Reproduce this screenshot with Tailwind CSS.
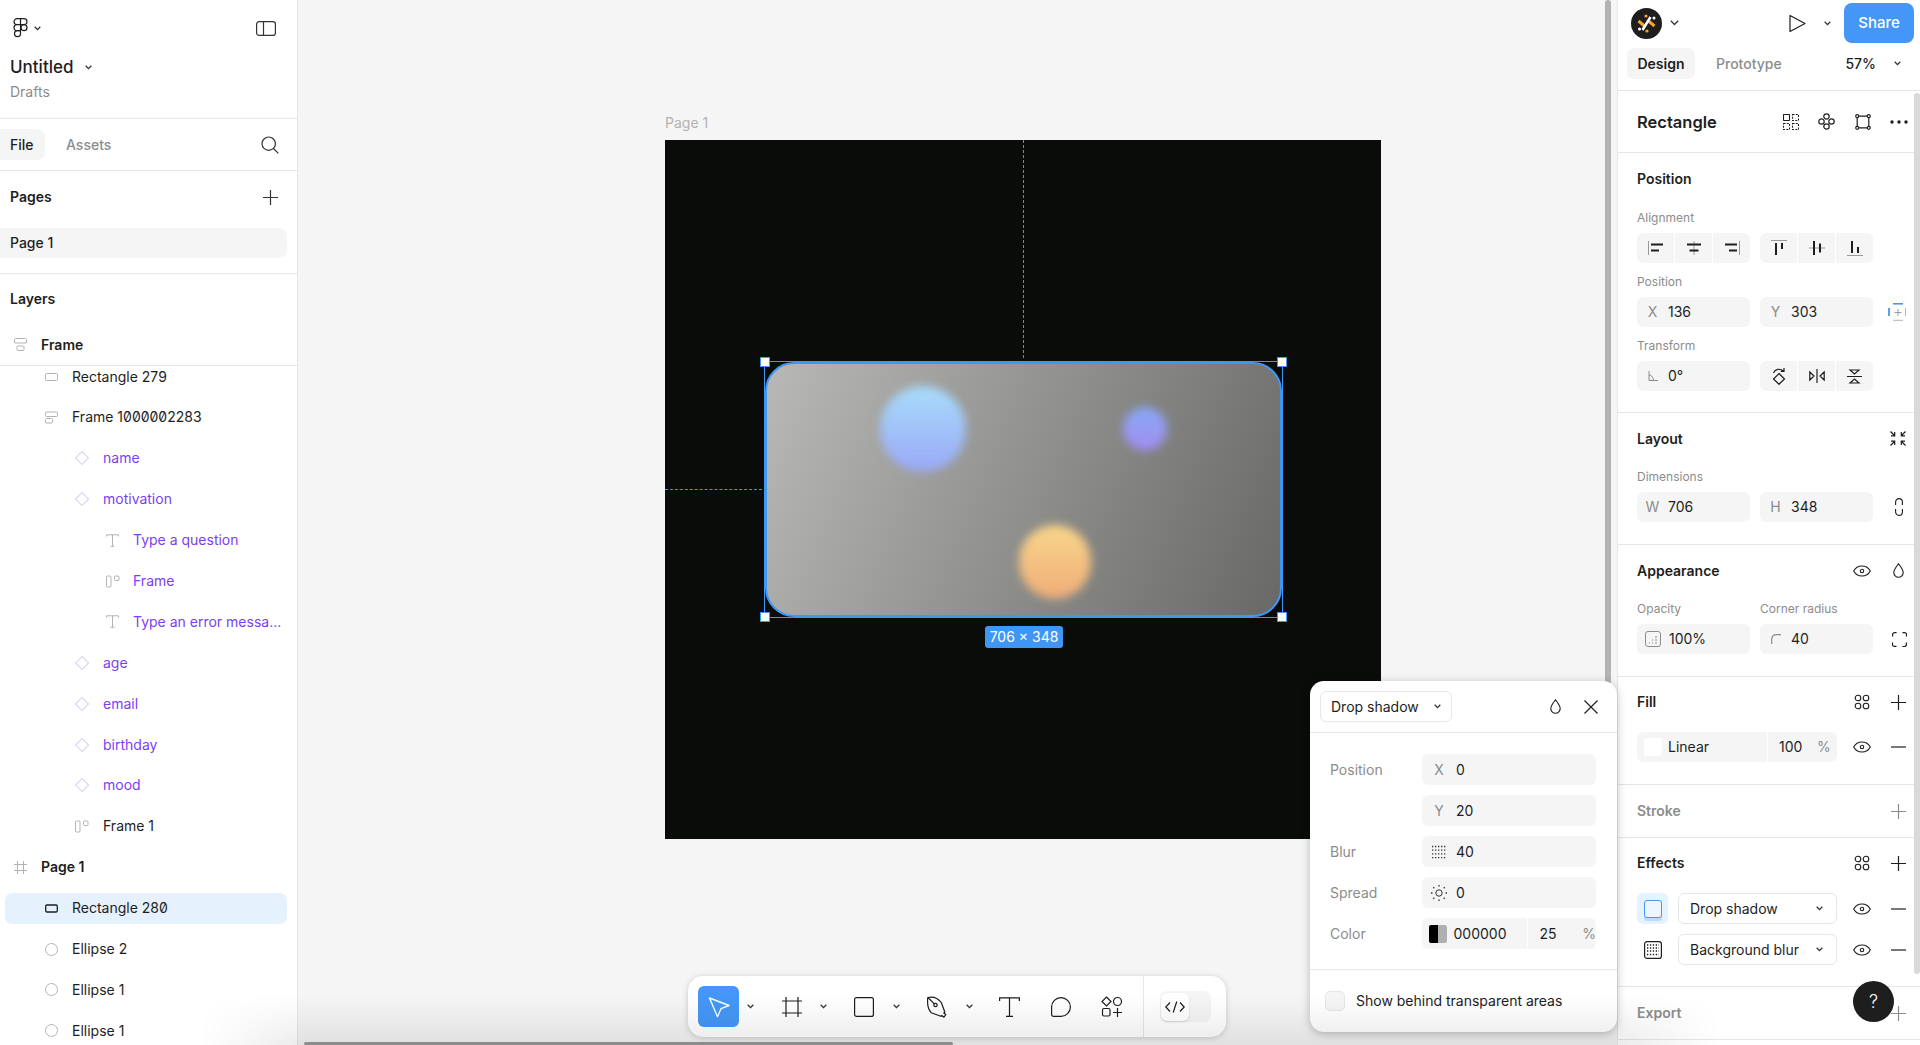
<!DOCTYPE html>
<html lang="en">
	<head>
		<meta charset="UTF-8" />
		<title>Untitled – Figma</title>
		<script src="https://cdn.jsdelivr.net/npm/@tailwindcss/browser@4"></script>
	</head>
	<body class="bg-white">
		<div class="relative flex w-[1920px] h-[1045px] overflow-hidden font-[Inter,sans-serif] text-[14px] leading-[20px] text-[#1e1e1e]">

			<!-- left panel -->
			<aside class="w-[298px] shrink-0 h-full bg-white border-r border-[#e6e6e6] overflow-hidden">
				<div class="h-[119px] pt-[8px] border-b border-[#e6e6e6] pl-[10px] pr-[21px]">
					<div class="flex items-center justify-between h-[40px]">
						<div class="flex items-center gap-[6px] pl-[3px]">
							<svg class="w-[15px] h-[20px]" viewBox="0 0 15 20" fill="none" stroke="#1e1e1e" stroke-width="1.2"><path d="M7.5.7H4a3 3 0 0 0 0 6h3.5zM7.5.7H11a3 3 0 0 1 0 6H7.5zM7.5 6.7H4a3 3 0 0 0 0 6h3.5z"/><circle cx="11" cy="9.7" r="3"/><path d="M7.5 12.7H4a3 3 0 1 0 3.500 3z"/></svg>
							<svg class="w-[7px] h-[5px]" viewBox="0 0 7 5" fill="none" stroke="#333" stroke-width="1.300"><path d="M.7.8l2.800 2.800L6.300.8"/></svg>
						</div>
						<svg class="w-[20px] h-[15px]" viewBox="0 0 20 15" fill="none" stroke="#333" stroke-width="1.200"><rect x=".6" y=".6" width="18.800" height="13.800" rx="2.500"/><path d="M7.500.6v13.800"/></svg>
					</div>
					<div class="flex items-center gap-[12px] h-[26px] mt-[6px]">
						<span class="text-[17px] font-medium">Untitled</span>
						<svg class="w-[7px] h-[5px]" viewBox="0 0 7 5" fill="none" stroke="#333" stroke-width="1.300"><path d="M.7.8l2.800 2.800L6.300.8"/></svg>
					</div>
					<div class="h-[20px] mt-[2px] text-[#8c8c8c]">Drafts</div>
				</div>
				<div class="flex items-center h-[52px] border-b border-[#e6e6e6] pr-[18px]">
					<div class="flex items-center w-[45px] h-[31px] pl-[10px] bg-[#f5f5f5] rounded-r-[8px] font-medium">File</div>
					<div class="ml-[21px] text-[#8c8c8c] font-medium">Assets</div>
					<svg class="ml-auto w-[18px] h-[18px]" viewBox="0 0 18 18" fill="none" stroke="#333" stroke-width="1.200"><circle cx="7.700" cy="7.700" r="6.700"/><path d="M12.500 12.500l4.800 4.800"/></svg>
				</div>
				<div class="h-[103px] border-b border-[#e6e6e6]">
					<div class="flex items-center justify-between h-[52px] pl-[10px] pr-[19px]">
						<span class="font-semibold">Pages</span>
						<svg class="w-[15px] h-[15px]" viewBox="0 0 15 15" stroke="#333" stroke-width="1.200"><path d="M7.500 0v15M0 7.500h15"/></svg>
					</div>
					<div class="flex items-center w-[287px] h-[30px] mt-[5px] pl-[10px] bg-[#f5f5f5] rounded-r-[8px] font-medium">Page 1</div>
				</div>
				<div class="flex items-center h-[50px] pl-[10px] font-semibold">Layers</div>
				<div class="flex items-center h-[42px] pl-[14px] border-b border-[#e6e6e6] font-semibold">
					<svg class="w-[13px] h-[13px] mr-[14px]" viewBox="0 0 13 13" fill="none" stroke="#b3b3b3"><rect x=".5" y=".5" width="12" height="4.500" rx="1"/><rect x="3" y="8" width="7" height="4.500" rx="1"/></svg>
					Frame
				</div>

				<!-- layer rows -->
				<div class="slashed-zero">
					<div class="flex items-end h-[31px] pb-[10px] pl-[45px]">
						<svg class="w-[13px] h-[20px] mr-[14px]" viewBox="0 0 13 20" fill="none" stroke="#b3b3b3"><rect x=".5" y="6.500" width="12" height="7" rx="1"/></svg>
						Rectangle 279
					</div>
					<div class="flex items-center h-[40.9px] pl-[45px]">
						<svg class="w-[13px] h-[13px] mr-[14px]" viewBox="0 0 13 13" fill="none" stroke="#b3b3b3"><rect x=".5" y="1" width="12" height="4.500" rx="1"/><rect x=".5" y="7.500" width="7" height="4.500" rx="1"/></svg>
						Frame 1000002283
					</div>
					<div class="flex items-center h-[40.9px] pl-[74px] text-[#7b3ff2]">
						<svg class="w-[16px] h-[16px] mr-[13px]" viewBox="0 0 16 16" fill="none" stroke="#c9bbf0"><path d="M8 1.500L14.500 8 8 14.500 1.500 8z"/></svg>
						name
					</div>
					<div class="flex items-center h-[40.9px] pl-[74px] text-[#7b3ff2]">
						<svg class="w-[16px] h-[16px] mr-[13px]" viewBox="0 0 16 16" fill="none" stroke="#c9bbf0"><path d="M8 1.500L14.500 8 8 14.500 1.500 8z"/></svg>
						motivation
					</div>
					<div class="flex items-center h-[40.9px] pl-[106px] text-[#7b3ff2]">
						<svg class="w-[13px] h-[13px] mr-[14px]" viewBox="0 0 13 13" fill="none" stroke="#b3b3b3"><path d="M.5 2.500V.8h12v1.700M6.500.8v11.500M4.500 12.300h4"/></svg>
						Type a question
					</div>
					<div class="flex items-center h-[40.9px] pl-[106px] text-[#7b3ff2]">
						<svg class="w-[14px] h-[13px] mr-[13px]" viewBox="0 0 14 13" fill="none" stroke="#b3b3b3"><rect x=".5" y="1" width="4.500" height="11" rx="1"/><rect x="8.500" y="1" width="4.500" height="4.500" rx="1"/></svg>
						Frame
					</div>
					<div class="flex items-center h-[40.9px] pl-[106px] text-[#7b3ff2]">
						<svg class="w-[13px] h-[13px] mr-[14px]" viewBox="0 0 13 13" fill="none" stroke="#b3b3b3"><path d="M.5 2.500V.8h12v1.700M6.500.8v11.500M4.500 12.300h4"/></svg>
						Type an error messa...
					</div>
					<div class="flex items-center h-[40.9px] pl-[74px] text-[#7b3ff2]">
						<svg class="w-[16px] h-[16px] mr-[13px]" viewBox="0 0 16 16" fill="none" stroke="#c9bbf0"><path d="M8 1.500L14.500 8 8 14.500 1.500 8z"/></svg>
						age
					</div>
					<div class="flex items-center h-[40.9px] pl-[74px] text-[#7b3ff2]">
						<svg class="w-[16px] h-[16px] mr-[13px]" viewBox="0 0 16 16" fill="none" stroke="#c9bbf0"><path d="M8 1.500L14.500 8 8 14.500 1.500 8z"/></svg>
						email
					</div>
					<div class="flex items-center h-[40.9px] pl-[74px] text-[#7b3ff2]">
						<svg class="w-[16px] h-[16px] mr-[13px]" viewBox="0 0 16 16" fill="none" stroke="#c9bbf0"><path d="M8 1.500L14.500 8 8 14.500 1.500 8z"/></svg>
						birthday
					</div>
					<div class="flex items-center h-[40.9px] pl-[74px] text-[#7b3ff2]">
						<svg class="w-[16px] h-[16px] mr-[13px]" viewBox="0 0 16 16" fill="none" stroke="#c9bbf0"><path d="M8 1.500L14.500 8 8 14.500 1.500 8z"/></svg>
						mood
					</div>
					<div class="flex items-center h-[40.9px] pl-[75px]">
						<svg class="w-[14px] h-[13px] mr-[14px]" viewBox="0 0 14 13" fill="none" stroke="#b3b3b3"><rect x=".5" y="1" width="4.500" height="11" rx="1"/><rect x="8.500" y="1" width="4.500" height="4.500" rx="1"/></svg>
						Frame 1
					</div>
					<div class="flex items-center h-[40.9px] pl-[14px] font-semibold">
						<svg class="w-[13px] h-[13px] mr-[14px]" viewBox="0 0 13 13" fill="none" stroke="#b3b3b3"><path d="M3.500 0v13M9.500 0v13M0 3.500h13M0 9.500h13"/></svg>
						Page 1
					</div>
					<div class="flex items-center h-[40.9px]">
						<div class="flex items-center w-[282px] h-[31px] ml-[5px] pl-[40px] bg-[#e5f2fd] rounded-[7px]">
							<svg class="w-[13px] h-[9px] mr-[14px]" viewBox="0 0 13 9" fill="none" stroke="#1e1e1e" stroke-width="1.300"><rect x=".7" y="1" width="11.600" height="7" rx="1.200"/></svg>
							Rectangle 280
						</div>
					</div>
					<div class="flex items-center h-[40.9px] pl-[45px]">
						<svg class="w-[13px] h-[13px] mr-[14px]" viewBox="0 0 13 13" fill="none" stroke="#b3b3b3"><circle cx="6.500" cy="6.500" r="6"/></svg>
						Ellipse 2
					</div>
					<div class="flex items-center h-[40.9px] pl-[45px]">
						<svg class="w-[13px] h-[13px] mr-[14px]" viewBox="0 0 13 13" fill="none" stroke="#b3b3b3"><circle cx="6.500" cy="6.500" r="6"/></svg>
						Ellipse 1
					</div>
					<div class="flex items-center h-[40.9px] pl-[45px]">
						<svg class="w-[13px] h-[13px] mr-[14px]" viewBox="0 0 13 13" fill="none" stroke="#b3b3b3"><circle cx="6.500" cy="6.500" r="6"/></svg>
						Ellipse 1
					</div>
				</div>
			</aside>

			<!-- canvas -->
			<main class="relative flex-1 h-full bg-[#f5f5f5]">
				<div class="absolute left-[367px] top-[113px] text-[#b3b3b3]">Page 1</div>
				<div class="absolute left-[367px] top-[140px] w-[716px] h-[699px] bg-[#0a0c0a]">
					<div class="absolute left-[358px] top-0 h-[218px] border-l border-dashed border-[#3f96f5]"></div>
					<div class="absolute left-0 top-[349px] w-[97px] border-t border-dashed border-[#3f96f5]"></div>
					<!-- selected rectangle -->
					<div class="absolute left-[99px] top-[221px] w-[519px] h-[257px] border border-[#3f96f5]">
						<div class="relative h-full overflow-hidden rounded-[29px] border-2 border-[#3f96f5] bg-[linear-gradient(112deg,#b8b8b6,#686966)]">
							<div class="absolute left-[113px] top-[22px] w-[86px] h-[86px] rounded-full blur-[5px] bg-gradient-to-b from-[#a8dcfb] to-[#99a8f6]"></div>
							<div class="absolute left-[356px] top-[43px] w-[44px] h-[44px] rounded-full blur-[5px] bg-gradient-to-b from-[#85a9f6] to-[#a18bf0]"></div>
							<div class="absolute left-[252px] top-[161px] w-[72px] h-[74px] rounded-full blur-[5px] bg-gradient-to-b from-[#f8d68a] to-[#efac78]"></div>
						</div>
						<div class="absolute -left-[5px] -top-[5px] w-[10px] h-[10px] bg-white border border-[#3f96f5]"></div>
						<div class="absolute -right-[5px] -top-[5px] w-[10px] h-[10px] bg-white border border-[#3f96f5]"></div>
						<div class="absolute -left-[5px] -bottom-[5px] w-[10px] h-[10px] bg-white border border-[#3f96f5]"></div>
						<div class="absolute -right-[5px] -bottom-[5px] w-[10px] h-[10px] bg-white border border-[#3f96f5]"></div>
					</div>
					<div class="absolute left-[320px] top-[486px] w-[78px] h-[22px] flex items-center justify-center bg-[#3f96f5] rounded-[3px] text-white">706 × 348</div>
				</div>
				<!-- canvas scrollbars -->
				<div class="absolute left-[1307px] top-0 w-[6px] h-[685px] bg-[#b3b3b3] rounded-full"></div>
				<div class="absolute left-[6px] bottom-0 w-[649px] h-[3px] bg-[#999999] rounded-full"></div>
			</main>

			<!-- right panel -->
			<aside class="relative w-[303px] shrink-0 h-full bg-white border-l border-[#e6e6e6] overflow-hidden">
				<div class="h-[91px] border-b border-[#e6e6e6]">
					<div class="flex items-center h-[46px] pr-[6px]">
						<svg class="ml-[13px] w-[31px] h-[31px]" viewBox="0 0 31 31">
							<circle cx="15.500" cy="15.500" r="15.500" fill="#1e1e1e"/>
							<path d="M7.500 13l6 5M17.500 13l6 5" stroke="#f5a623" stroke-width="3"/>
							<path d="M11.500 22l8-13" stroke="#ffffff" stroke-width="2.500"/>
							<circle cx="15" cy="8" r="1.600" fill="#f5a623"/>
							<circle cx="16" cy="23" r="1.600" fill="#f5a623"/>
							<circle cx="23" cy="10" r="1.500" fill="#ffffff"/>
							<circle cx="8.500" cy="21" r="1.500" fill="#ffffff"/>
						</svg>
						<svg class="ml-[8px] w-[9px] h-[6px]" viewBox="0 0 9 6" fill="none" stroke="#333" stroke-width="1.300"><path d="M.8.8L4.500 4.500 8.200.8"/></svg>
						<svg class="ml-[110px] w-[17px] h-[19px]" viewBox="0 0 17 19" fill="none" stroke="#1e1e1e" stroke-width="1.200" stroke-linejoin="round"><path d="M1 1.500v16L16 9.500z"/></svg>
						<svg class="ml-[18px] w-[7px] h-[5px]" viewBox="0 0 7 5" fill="none" stroke="#333" stroke-width="1.300"><path d="M.7.8l2.800 2.800L6.300.8"/></svg>
						<div class="ml-auto flex items-center justify-center w-[70px] h-[40px] bg-[#4597f7] rounded-[8px] text-white text-[15px] font-medium">Share</div>
					</div>
					<div class="flex items-center h-[33px] mt-[1px] pl-[9px] pr-[19px]">
						<div class="flex items-center justify-center w-[68px] h-[31px] bg-[#f5f5f5] rounded-[7px] font-semibold">Design</div>
						<div class="ml-[21px] text-[#8c8c8c] font-medium">Prototype</div>
						<div class="ml-auto font-medium">57%</div>
						<svg class="ml-[18px] w-[7px] h-[5px]" viewBox="0 0 7 5" fill="none" stroke="#333" stroke-width="1.300"><path d="M.7.8l2.800 2.800L6.300.8"/></svg>
					</div>
				</div>
				<div class="flex items-center h-[62px] pl-[19px] border-b border-[#e6e6e6]">
					<span class="text-[16.5px] font-semibold">Rectangle</span>
					<svg class="ml-[66px] w-[16px] h-[16px]" viewBox="0 0 16 16" fill="none" stroke="#1e1e1e" stroke-width="1.100"><rect x=".5" y=".5" width="6" height="6" rx=".5"/><rect x="9.500" y=".5" width="6" height="6" stroke-dasharray="2 1.300"/><rect x=".5" y="9.500" width="6" height="6" stroke-dasharray="2 1.300"/><rect x="9.500" y="9.500" width="6" height="6" stroke-dasharray="2 1.300"/></svg>
					<svg class="ml-[19px] w-[17px] h-[17px]" viewBox="0 0 17 17" fill="none" stroke="#1e1e1e" stroke-width="1.200"><circle cx="8.500" cy="3.500" r="2.700"/><circle cx="13.500" cy="8.500" r="2.700"/><circle cx="3.500" cy="8.500" r="2.700"/><circle cx="8.500" cy="13.500" r="2.700"/></svg>
					<svg class="ml-[20px] w-[16px] h-[16px]" viewBox="0 0 16 16" fill="none" stroke="#1e1e1e" stroke-width="1.200"><path d="M3.500 2.200h9M13.800 3.500v9M12.500 13.800h-9M2.200 12.500v-9"/><circle cx="2.200" cy="2.200" r="1.500"/><circle cx="13.800" cy="2.200" r="1.500"/><circle cx="13.800" cy="13.800" r="1.500"/><circle cx="2.200" cy="13.800" r="1.500"/></svg>
					<svg class="ml-[19px] w-[18px] h-[4px]" viewBox="0 0 18 4" fill="#1e1e1e"><circle cx="2" cy="2" r="1.700"/><circle cx="9" cy="2" r="1.700"/><circle cx="16" cy="2" r="1.700"/></svg>
				</div>

				<!-- position -->
				<section class="h-[260px] pl-[19px] border-b border-[#e6e6e6]">
					<div class="flex items-center h-[52px] font-semibold">Position</div>
					<div class="h-[28px] pt-[5px] text-[12px] leading-[16px] text-[#8c8c8c]">Alignment</div>
					<div class="flex gap-[10px]">
						<div class="flex gap-px w-[113px] h-[30px] bg-white rounded-[6px] overflow-hidden">
							<div class="flex-1 flex items-center justify-center bg-[#f5f5f5]"><svg class="w-[16px] h-[14px]" viewBox="0 0 16 14"><path d="M.5 0v14" stroke="#999"/><path d="M3 3.500h12M3 9.500h8" stroke="#1e1e1e" stroke-width="2"/></svg></div>
							<div class="flex-1 flex items-center justify-center bg-[#f5f5f5]"><svg class="w-[16px] h-[14px]" viewBox="0 0 16 14"><path d="M8 0v14" stroke="#999"/><path d="M1 3.500h14M3.500 9.500h9" stroke="#1e1e1e" stroke-width="2"/></svg></div>
							<div class="flex-1 flex items-center justify-center bg-[#f5f5f5]"><svg class="w-[16px] h-[14px]" viewBox="0 0 16 14"><path d="M15.500 0v14" stroke="#999"/><path d="M1 3.500h12M5 9.500h8" stroke="#1e1e1e" stroke-width="2"/></svg></div>
						</div>
						<div class="flex gap-px w-[113px] h-[30px] bg-white rounded-[6px] overflow-hidden">
							<div class="flex-1 flex items-center justify-center bg-[#f5f5f5]"><svg class="w-[16px] h-[16px]" viewBox="0 0 16 16"><path d="M0 .5h16" stroke="#999"/><path d="M5 3v12M11 3v6" stroke="#1e1e1e" stroke-width="2"/></svg></div>
							<div class="flex-1 flex items-center justify-center bg-[#f5f5f5]"><svg class="w-[16px] h-[14px]" viewBox="0 0 16 14"><path d="M0 7h16" stroke="#999"/><path d="M5 0v14M11 2.500v9" stroke="#1e1e1e" stroke-width="2"/></svg></div>
							<div class="flex-1 flex items-center justify-center bg-[#f5f5f5]"><svg class="w-[16px] h-[16px]" viewBox="0 0 16 16"><path d="M0 15.500h16" stroke="#999"/><path d="M5 1v12M11 7v6" stroke="#1e1e1e" stroke-width="2"/></svg></div>
						</div>
					</div>
					<div class="h-[34px] pt-[11px] text-[12px] leading-[16px] text-[#8c8c8c]">Position</div>
					<div class="flex items-center gap-[10px]">
						<div class="flex items-center w-[113px] h-[30px] bg-[#f5f5f5] rounded-[6px]"><span class="w-[31px] text-center text-[#8c8c8c]">X</span>136</div>
						<div class="flex items-center w-[113px] h-[30px] bg-[#f5f5f5] rounded-[6px]"><span class="w-[31px] text-center text-[#8c8c8c]">Y</span>303</div>
						<svg class="ml-[5px] w-[18px] h-[18px]" viewBox="0 0 18 18" fill="none"><path d="M5 .8h10" stroke="#4597f7" stroke-width="1.600"/><path d="M1 5v8" stroke="#4597f7" stroke-width="1.800"/><path d="M5 17.300h10M17.500 5v8" stroke="#b3b3b3"/><path d="M10 6v7M6.500 9.500h7" stroke="#999"/></svg>
					</div>
					<div class="h-[34px] pt-[11px] text-[12px] leading-[16px] text-[#8c8c8c]">Transform</div>
					<div class="flex gap-[10px]">
						<div class="flex items-center w-[113px] h-[30px] bg-[#f5f5f5] rounded-[6px]"><span class="flex justify-center w-[31px]"><svg class="w-[10px] h-[10px]" viewBox="0 0 10 10" fill="none" stroke="#8c8c8c"><path d="M1 0v9.500h9M1 4c2.500 0 4.500 2.500 4.500 5.500"/></svg></span>0°</div>
						<div class="flex gap-px w-[113px] h-[30px] bg-white rounded-[6px] overflow-hidden">
							<div class="flex-1 flex items-center justify-center bg-[#f5f5f5]"><svg class="w-[14px] h-[18px]" viewBox="0 0 14 18" fill="none" stroke="#1e1e1e" stroke-width="1.200"><path d="M7 6.500l5.500 5.500L7 17.300 1.500 12zM1.500 6C3 2 8 1 11.500 4M12 1v3.300H8.700"/></svg></div>
							<div class="flex-1 flex items-center justify-center bg-[#f5f5f5]"><svg class="w-[16px] h-[14px]" viewBox="0 0 16 14" fill="none" stroke="#1e1e1e" stroke-width="1.200"><path d="M8 0v14M.8 3v8L5 7zM15.200 3v8L11 7z"/></svg></div>
							<div class="flex-1 flex items-center justify-center bg-[#f5f5f5]"><svg class="w-[15px] h-[15px]" viewBox="0 0 15 15" fill="none" stroke="#1e1e1e" stroke-width="1.200"><path d="M0 7.500h15M3 1h9L7.500 5zM3 14h9L7.500 10z"/></svg></div>
						</div>
					</div>
				</section>

				<!-- layout -->
				<section class="h-[132px] pl-[19px] border-b border-[#e6e6e6]">
					<div class="flex items-center justify-between h-[51px] pr-[14px] font-semibold">
						Layout
						<svg class="w-[16px] h-[15px]" viewBox="0 0 16 15" fill="none" stroke="#1e1e1e" stroke-width="1.200"><path d="M.5.500l4 4M1 4.800h3.700V1M15.500.500l-4 4M15 4.800h-3.700V1M.5 14.500l4-4M1 10.200h3.700V14M15.500 14.500l-4-4M15 10.200h-3.700V14"/></svg>
					</div>
					<div class="h-[28px] pt-[5px] text-[12px] leading-[16px] text-[#8c8c8c]">Dimensions</div>
					<div class="flex items-center gap-[10px]">
						<div class="flex items-center w-[113px] h-[30px] bg-[#f5f5f5] rounded-[6px]"><span class="w-[31px] text-center text-[#8c8c8c]">W</span>706</div>
						<div class="flex items-center w-[113px] h-[30px] bg-[#f5f5f5] rounded-[6px]"><span class="w-[31px] text-center text-[#8c8c8c]">H</span>348</div>
						<svg class="ml-[12px] w-[8px] h-[18px]" viewBox="0 0 8 18" fill="none" stroke="#1e1e1e" stroke-width="1.100"><path d="M.6 7V4a3.400 3.400 0 0 1 6.800 0v3M.6 11v3a3.400 3.400 0 0 0 6.800 0v-3"/></svg>
					</div>
				</section>

				<!-- appearance -->
				<section class="h-[132px] pl-[19px] border-b border-[#e6e6e6]">
					<div class="flex items-center h-[51px] pr-[16px] font-semibold">
						Appearance
						<svg class="ml-auto w-[18px] h-[12px]" viewBox="0 0 18 12" fill="none" stroke="#1e1e1e" stroke-width="1.100"><path d="M.7 6C2.500 2.600 5.500 1 9 1s6.500 1.600 8.300 5C15.500 9.400 12.500 11 9 11S2.500 9.400.7 6z"/><circle cx="9" cy="6" r="1.700" /></svg>
						<svg class="ml-[22px] w-[11px] h-[15px]" viewBox="0 0 11 15" fill="none" stroke="#1e1e1e" stroke-width="1.100"><path d="M5.500.8C3.500 3.500.8 6.500.8 9.500a4.700 4.700 0 0 0 9.400 0C10.200 6.500 7.500 3.500 5.500.8z"/></svg>
					</div>
					<div class="flex gap-[10px] h-[28px] pt-[5px] text-[12px] leading-[16px] text-[#8c8c8c]"><span class="w-[113px]">Opacity</span><span>Corner radius</span></div>
					<div class="flex items-center gap-[10px]">
						<div class="flex items-center w-[113px] h-[30px] bg-[#f5f5f5] rounded-[6px]"><span class="flex justify-center w-[32px]"><svg class="w-[16px] h-[16px]" viewBox="0 0 16 16" fill="none" stroke="#8c8c8c"><rect x=".5" y=".5" width="15" height="15" rx="2.500"/><path d="M4 12h1M7 12h1M10 12h2M7 9h1M10 9h2M10 6h2" stroke-width="1.200"/></svg></span>100%</div>
						<div class="flex items-center w-[113px] h-[30px] bg-[#f5f5f5] rounded-[6px]"><span class="flex justify-center w-[31px]"><svg class="w-[10px] h-[10px]" viewBox="0 0 10 10" fill="none" stroke="#8c8c8c" stroke-width="1.200"><path d="M.7 10V5A4.300 4.300 0 0 1 5 .7h5"/></svg></span>40</div>
						<svg class="ml-[9px] w-[15px] h-[15px]" viewBox="0 0 15 15" fill="none" stroke="#1e1e1e" stroke-width="1.200"><path d="M.6 4.500V2.600a2 2 0 0 1 2-2h2M10.500.6h2a2 2 0 0 1 2 2v2M14.400 10.500v2a2 2 0 0 1-2 2h-2M4.500 14.400h-2a2 2 0 0 1-2-2v-2"/></svg>
					</div>
				</section>

				<!-- fill -->
				<section class="h-[108px] pl-[19px] border-b border-[#e6e6e6]">
					<div class="flex items-center h-[50px] pr-[14px] font-semibold">
						Fill
						<svg class="ml-auto w-[16px] h-[16px]" viewBox="0 0 16 16" fill="none" stroke="#1e1e1e" stroke-width="1.100"><circle cx="4" cy="4" r="2.800"/><circle cx="12" cy="4" r="2.800"/><circle cx="4" cy="12" r="2.800"/><circle cx="12" cy="12" r="2.800"/></svg>
						<svg class="ml-[21px] w-[15px] h-[15px]" viewBox="0 0 15 15" stroke="#1e1e1e" stroke-width="1.200"><path d="M7.500 0v15M0 7.500h15"/></svg>
					</div>
					<div class="flex items-center mt-[5px]">
						<div class="flex items-center w-[200px] h-[30px] bg-[#f5f5f5] rounded-[6px] pl-[7px]">
							<span class="w-[18px] h-[18px] bg-white rounded-[3px] mr-[6px]"></span>
							<span class="w-[99px]">Linear</span>
							<span class="flex items-center h-full border-l border-white pl-[11px] w-[50px]">100</span>
							<span class="text-[#8c8c8c]">%</span>
						</div>
						<svg class="ml-[16px] w-[18px] h-[12px]" viewBox="0 0 18 12" fill="none" stroke="#1e1e1e" stroke-width="1.100"><path d="M.7 6C2.500 2.600 5.500 1 9 1s6.500 1.600 8.300 5C15.500 9.400 12.500 11 9 11S2.500 9.400.7 6z"/><circle cx="9" cy="6" r="1.700"/></svg>
						<svg class="ml-[20px] w-[15px] h-[2px]" viewBox="0 0 15 2" stroke="#1e1e1e" stroke-width="1.200"><path d="M0 1h15"/></svg>
					</div>
				</section>

				<!-- stroke -->
				<section class="flex items-center h-[53px] pl-[19px] pr-[14px] border-b border-[#e6e6e6] font-semibold text-[#8c8c8c]">
					Stroke
					<svg class="ml-auto w-[15px] h-[15px]" viewBox="0 0 15 15" stroke="#8c8c8c" stroke-width="1.200"><path d="M7.500 0v15M0 7.500h15"/></svg>
				</section>

				<!-- effects -->
				<section class="h-[149px] pl-[19px] border-b border-[#e6e6e6]">
					<div class="flex items-center h-[50px] pr-[14px] font-semibold">
						Effects
						<svg class="ml-auto w-[16px] h-[16px]" viewBox="0 0 16 16" fill="none" stroke="#1e1e1e" stroke-width="1.100"><circle cx="4" cy="4" r="2.800"/><circle cx="12" cy="4" r="2.800"/><circle cx="4" cy="12" r="2.800"/><circle cx="12" cy="12" r="2.800"/></svg>
						<svg class="ml-[21px] w-[15px] h-[15px]" viewBox="0 0 15 15" stroke="#1e1e1e" stroke-width="1.200"><path d="M7.500 0v15M0 7.500h15"/></svg>
					</div>
					<div class="flex items-center mt-[5px]">
						<div class="flex items-center justify-center w-[31px] h-[31px] bg-[#e5f2ff] rounded-[6px]">
							<span class="w-[18px] h-[18px] rounded-[3px] border-[1.500px] border-[#4597f7] bg-[#edf5fe] shadow-[0_3px_0_#bcdcfb]"></span>
						</div>
						<div class="flex items-center justify-between w-[159px] h-[31px] ml-[10px] pl-[11px] pr-[13px] border border-[#e6e6e6] rounded-[6px]">
							Drop shadow
							<svg class="w-[7px] h-[5px]" viewBox="0 0 7 5" fill="none" stroke="#333" stroke-width="1.300"><path d="M.7.8l2.800 2.800L6.300.8"/></svg>
						</div>
						<svg class="ml-[16px] w-[18px] h-[12px]" viewBox="0 0 18 12" fill="none" stroke="#1e1e1e" stroke-width="1.100"><path d="M.7 6C2.500 2.600 5.500 1 9 1s6.500 1.600 8.300 5C15.500 9.400 12.500 11 9 11S2.500 9.400.7 6z"/><circle cx="9" cy="6" r="1.700"/></svg>
						<svg class="ml-[20px] w-[15px] h-[2px]" viewBox="0 0 15 2" stroke="#1e1e1e" stroke-width="1.200"><path d="M0 1h15"/></svg>
					</div>
					<div class="flex items-center mt-[10px]">
						<div class="flex items-center justify-center w-[31px] h-[31px]">
							<svg class="w-[18px] h-[18px]" viewBox="0 0 18 18" fill="none"><rect x=".6" y=".6" width="16.800" height="16.800" rx="2.500" stroke="#1e1e1e" stroke-width="1.200"/><path d="M3 4h12M3 7h12M3 10h12M3 13.500h12" stroke="#1e1e1e" stroke-width="1.300" stroke-dasharray="1.300 1.600"/></svg>
						</div>
						<div class="flex items-center justify-between w-[159px] h-[31px] ml-[10px] pl-[11px] pr-[13px] border border-[#e6e6e6] rounded-[6px]">
							Background blur
							<svg class="w-[7px] h-[5px]" viewBox="0 0 7 5" fill="none" stroke="#333" stroke-width="1.300"><path d="M.7.8l2.800 2.800L6.300.8"/></svg>
						</div>
						<svg class="ml-[16px] w-[18px] h-[12px]" viewBox="0 0 18 12" fill="none" stroke="#1e1e1e" stroke-width="1.100"><path d="M.7 6C2.500 2.600 5.500 1 9 1s6.500 1.600 8.300 5C15.500 9.400 12.500 11 9 11S2.500 9.400.7 6z"/><circle cx="9" cy="6" r="1.700"/></svg>
						<svg class="ml-[20px] w-[15px] h-[2px]" viewBox="0 0 15 2" stroke="#1e1e1e" stroke-width="1.200"><path d="M0 1h15"/></svg>
					</div>
				</section>

				<!-- export -->
				<section class="flex items-center h-[53px] pl-[19px] pr-[14px] border-b border-[#e6e6e6] font-semibold text-[#8c8c8c]">
					Export
					<svg class="ml-auto w-[15px] h-[15px]" viewBox="0 0 15 15" stroke="#8c8c8c" stroke-width="1.200"><path d="M7.500 0v15M0 7.500h15"/></svg>
				</section>

				<div class="absolute right-0 top-[93px] w-[6px] h-[881px] bg-[#d9d9d9] rounded-full"></div>
				<div class="absolute left-[235px] top-[981px] flex items-center justify-center w-[41px] h-[41px] rounded-full bg-[#1e1e1e] text-white text-[18px] font-light">?</div>
			</aside>

			<!-- bottom toolbar -->
			<div class="absolute left-[688px] top-[976px] flex items-center w-[538px] h-[61px] pl-[10px] bg-white rounded-[15px] shadow-[0_1px_6px_rgba(0,0,0,0.18)]">
				<div class="flex items-center justify-center w-[41px] h-[41px] bg-[#4597f7] rounded-[6px]">
					<svg class="w-[24px] h-[24px]" viewBox="0 0 24 24" fill="none" stroke="#ffffff" stroke-width="1.400" stroke-linejoin="round"><path d="M2.500 3L22 10.500l-8 3.200-3.500 8z"/></svg>
				</div>
				<svg class="ml-[8px] w-[7px] h-[5px]" viewBox="0 0 7 5" fill="none" stroke="#333" stroke-width="1.300"><path d="M.7.8l2.800 2.800L6.300.8"/></svg>
				<svg class="ml-[28px] w-[20px] h-[20px]" viewBox="0 0 20 20" stroke="#1e1e1e" stroke-width="1.200"><path d="M4 0v20M16 0v20M0 4h20M0 16h20"/></svg>
				<svg class="ml-[18px] w-[7px] h-[5px]" viewBox="0 0 7 5" fill="none" stroke="#333" stroke-width="1.300"><path d="M.7.8l2.800 2.800L6.300.8"/></svg>
				<svg class="ml-[27px] w-[20px] h-[20px]" viewBox="0 0 20 20" fill="none" stroke="#1e1e1e" stroke-width="1.200"><rect x=".6" y=".6" width="18.800" height="18.800" rx="2"/></svg>
				<svg class="ml-[19px] w-[7px] h-[5px]" viewBox="0 0 7 5" fill="none" stroke="#333" stroke-width="1.300"><path d="M.7.8l2.800 2.800L6.300.8"/></svg>
				<svg class="ml-[27px] w-[22px] h-[22px]" viewBox="0 0 22 22" fill="none" stroke="#1e1e1e" stroke-width="1.200" stroke-linejoin="round"><path d="M.8 1.500c5-1.200 10 .5 13.500 5l3.500 9.500-1 1 2 1.500-1.800 2.700-2.200-1.700-1 .8-9.500-3.500C.8 13 .2 6.500.8 1.500z"/><circle cx="8.500" cy="9" r="1.700"/><path d="M1 1.500L7.300 7.800"/></svg>
				<svg class="ml-[17px] w-[7px] h-[5px]" viewBox="0 0 7 5" fill="none" stroke="#333" stroke-width="1.300"><path d="M.7.8l2.800 2.800L6.300.8"/></svg>
				<svg class="ml-[26px] w-[21px] h-[20px]" viewBox="0 0 21 20" fill="none" stroke="#1e1e1e" stroke-width="1.200"><path d="M.6 4V.8h19.800V4M10.500.8v18.600M7 19.400h7"/></svg>
				<svg class="ml-[31px] w-[20px] h-[20px]" viewBox="0 0 20 20" fill="none" stroke="#1e1e1e" stroke-width="1.200"><path d="M10 .6a9.400 9.400 0 0 1 0 18.800H2.600a2 2 0 0 1-2-2V10A9.400 9.400 0 0 1 10 .6z"/></svg>
				<svg class="ml-[30px] w-[22px] h-[22px]" viewBox="0 0 22 22" fill="none" stroke="#1e1e1e" stroke-width="1.200"><path d="M5.500 1L10 5.500 5.500 10 1 5.500z"/><circle cx="16.500" cy="5.500" r="4"/><rect x="1.500" y="12.500" width="7.500" height="7.500" rx="1.500"/><path d="M16.500 12v9M12 16.500h9"/></svg>
				<div class="ml-[20px] w-px h-full bg-[#e6e6e6]"></div>
				<div class="ml-[16px] w-[51px] h-[31px] p-px bg-[#f5f5f5] rounded-[7px]">
					<div class="flex items-center justify-center w-[28px] h-[28px] mt-px bg-white rounded-[6px] shadow-[0_1px_2px_rgba(0,0,0,0.15)]">
						<svg class="w-[20px] h-[12px]" viewBox="0 0 20 12" fill="none" stroke="#1e1e1e" stroke-width="1.200"><path d="M5 1.500L.8 6 5 10.500M15 1.500L19.200 6 15 10.500M11.800.5L8.200 11.500"/></svg>
					</div>
				</div>
			</div>

			<!-- drop shadow popup -->
			<div class="absolute left-[1310px] top-[681px] w-[307px] h-[351px] bg-white rounded-[14px] shadow-[0_2px_10px_rgba(0,0,0,0.25)]">
				<div class="flex items-center h-[52px] pl-[10px] pr-[19px] border-b border-[#e6e6e6]">
					<div class="flex items-center justify-between w-[132px] h-[31px] px-[10px] border border-[#e6e6e6] rounded-[6px]">
						Drop shadow
						<svg class="w-[7px] h-[5px]" viewBox="0 0 7 5" fill="none" stroke="#333" stroke-width="1.300"><path d="M.7.8l2.800 2.800L6.300.8"/></svg>
					</div>
					<svg class="ml-auto w-[11px] h-[15px]" viewBox="0 0 11 15" fill="none" stroke="#1e1e1e" stroke-width="1.100"><path d="M5.500.8C3.500 3.500.8 6.500.8 9.500a4.700 4.700 0 0 0 9.400 0C10.200 6.500 7.500 3.500 5.500.8z"/></svg>
					<svg class="ml-[23px] w-[14px] h-[14px]" viewBox="0 0 14 14" stroke="#1e1e1e" stroke-width="1.200"><path d="M.5.500l13 13M13.500.500l-13 13"/></svg>
				</div>
				<div class="h-[237px] pl-[20px] pt-[21px] border-b border-[#e6e6e6]">
					<div class="flex items-center h-[31px]">
						<span class="w-[92px] text-[#8c8c8c]">Position</span>
						<div class="flex items-center w-[174px] h-[31px] bg-[#f5f5f5] rounded-[6px]"><span class="w-[34px] text-center text-[#8c8c8c]">X</span>0</div>
					</div>
					<div class="flex items-center h-[31px] mt-[10px]">
						<span class="w-[92px]"></span>
						<div class="flex items-center w-[174px] h-[31px] bg-[#f5f5f5] rounded-[6px]"><span class="w-[34px] text-center text-[#8c8c8c]">Y</span>20</div>
					</div>
					<div class="flex items-center h-[31px] mt-[10px]">
						<span class="w-[92px] text-[#8c8c8c]">Blur</span>
						<div class="flex items-center w-[174px] h-[31px] bg-[#f5f5f5] rounded-[6px]"><span class="flex justify-center w-[34px]"><svg class="w-[14px] h-[14px]" viewBox="0 0 14 14" stroke="#333" stroke-width="1.300"><path d="M0 1.500h14M0 5.200h14M0 8.900h14M0 12.600h14" stroke-dasharray="1.300 1.700"/></svg></span>40</div>
					</div>
					<div class="flex items-center h-[31px] mt-[10px]">
						<span class="w-[92px] text-[#8c8c8c]">Spread</span>
						<div class="flex items-center w-[174px] h-[31px] bg-[#f5f5f5] rounded-[6px]"><span class="flex justify-center w-[34px]"><svg class="w-[16px] h-[16px]" viewBox="0 0 16 16" fill="none" stroke="#333"><circle cx="8" cy="8" r="3.200"/><path d="M8 0v1.500M8 14.500V16M0 8h1.500M14.500 8H16M2.300 2.300l1 1M12.700 12.700l1 1M2.300 13.700l1-1M12.700 3.300l1-1" stroke-width="1.300"/></svg></span>0</div>
					</div>
					<div class="flex items-center h-[31px] mt-[10px]">
						<span class="w-[92px] text-[#8c8c8c]">Color</span>
						<div class="flex items-center w-[174px] h-[31px] bg-[#f5f5f5] rounded-[6px] pl-[7px]">
							<span class="flex w-[18px] h-[18px] rounded-[2px] overflow-hidden mr-[7px]"><span class="w-1/2 bg-black"></span><span class="w-1/2 bg-[#b0b0b0]"></span></span>
							<span class="w-[76px]">000000</span>
							<span class="flex items-center h-full w-[56px] pl-[11px] border-l border-white">25</span>
							<span class="text-[#8c8c8c]">%</span>
						</div>
					</div>
				</div>
				<div class="flex items-center h-[61px] pl-[15px]">
					<span class="w-[20px] h-[20px] mr-[11px] bg-[#f5f5f5] border border-[#e6e6e6] rounded-[5px]"></span>
					Show behind transparent areas
				</div>
			</div>

			<!-- soft shading along the bottom edge of the screen -->
			<div class="absolute left-[200px] right-[200px] bottom-0 h-[50px] pointer-events-none bg-gradient-to-t from-black/8 to-transparent [mask-image:linear-gradient(90deg,transparent,black_7%,black_93%,transparent)]"></div>
		</div>
	</body>
</html>
